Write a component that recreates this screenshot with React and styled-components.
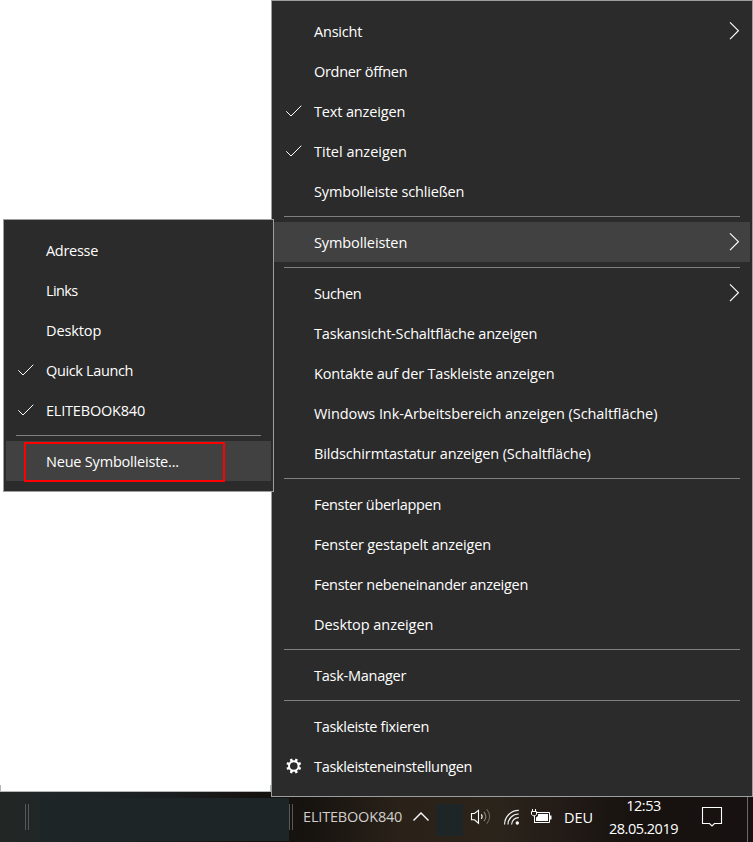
import styled, { createGlobalStyle } from "styled-components";

const GlobalStyle = createGlobalStyle`
    * { box-sizing: border-box; }
    body {
        margin: 0;
        background: #fff;
        overflow: hidden;
        font-family: "Open Sans", "Noto Sans", sans-serif;
    }
    svg { display: block; flex: none; }
`;

const mainItems = [
    { text: "Ansicht", arrow: true, spacing: -0.2 },
    { text: "Ordner öffnen", spacing: -0.3 },
    { text: "Text anzeigen", icon: "check", spacing: -0.15 },
    { text: "Titel anzeigen", icon: "check" },
    { text: "Symbolleiste schließen", spacing: -0.15 },
    { line: true },
    { text: "Symbolleisten", arrow: true, active: true, spacing: -0.1 },
    { line: true },
    { text: "Suchen", arrow: true, spacing: -0.4 },
    { text: "Taskansicht-Schaltfläche anzeigen", spacing: -0.18 },
    { text: "Kontakte auf der Taskleiste anzeigen", spacing: -0.19 },
    { text: "Windows Ink-Arbeitsbereich anzeigen (Schaltfläche)", spacing: -0.07 },
    { text: "Bildschirmtastatur anzeigen (Schaltfläche)", spacing: -0.14 },
    { line: true },
    { text: "Fenster überlappen", spacing: -0.32 },
    { text: "Fenster gestapelt anzeigen", spacing: -0.14 },
    { text: "Fenster nebeneinander anzeigen", spacing: -0.27 },
    { text: "Desktop anzeigen", spacing: -0.05 },
    { line: true },
    { text: "Task-Manager", spacing: -0.26 },
    { line: true },
    { text: "Taskleiste fixieren", spacing: -0.31 },
    { text: "Taskleisteneinstellungen", icon: "gear", spacing: -0.33 },
];

const subItems = [
    { text: "Adresse", spacing: -0.3 },
    { text: "Links", spacing: -0.6 },
    { text: "Desktop", spacing: -0.1 },
    { text: "Quick Launch", icon: "check", spacing: -0.36 },
    { text: "ELITEBOOK840", icon: "check", spacing: -0.2 },
    { line: true },
    { text: "Neue Symbolleiste...", active: true, marked: true, spacing: -0.2 },
];

function CheckIcon() {
    return (
        <svg width="18" height="14" viewBox="0 0 18 14" fill="none" stroke="#fff" strokeWidth="1">
            <path d="M1.3 7.3 L6 12 L16.3 1.7" />
        </svg>
    );
}

function GearIcon() {
    return (
        <svg width="17" height="16" viewBox="0 0 17 16" fill="none" stroke="#fff">
            <circle cx="8.8" cy="8" r="4.8" strokeWidth="2" />
            <path
                strokeWidth="2.5"
                d="M13.4 9.9 L15.7 10.9 M10.7 12.6 L11.7 14.9 M6.9 12.6 L5.9 14.9 M4.2 9.9 L1.9 10.9 M4.2 6.1 L1.9 5.1 M6.9 3.4 L5.9 1.1 M10.7 3.4 L11.7 1.1 M13.4 6.1 L15.7 5.1"
            />
        </svg>
    );
}

function ArrowIcon() {
    return (
        <svg width="12" height="20" viewBox="0 0 12 20" fill="none" stroke="#fff" strokeWidth="1.2">
            <path d="M2 1.3 L10.4 9.7 L2 18.1" />
        </svg>
    );
}

function CaretIcon() {
    return (
        <svg width="18" height="12" viewBox="0 0 18 12" fill="none" stroke="#fff" strokeWidth="1.4">
            <path d="M1.5 9.5 L9 2 L16.5 9.5" />
        </svg>
    );
}

function SpeakerIcon() {
    return (
        <svg width="22" height="20" viewBox="0 0 22 20" fill="none" stroke="#fff" strokeWidth="1.1">
            <path d="M1.5 6.5 H4.5 L8.5 3.3 V16.2 L4.5 12.8 H1.5 Z" />
            <path d="M11.3 7.4 Q13 9.6 11.3 11.8" />
            <path stroke="#85807a" d="M13.9 4.8 Q17.6 9.5 13.9 14.2" />
            <path stroke="#6b655e" d="M16.7 2.2 Q22.6 9.5 16.7 16.8" />
        </svg>
    );
}

function WifiIcon() {
    return (
        <svg width="18" height="18" viewBox="0 0 18 18" fill="none" stroke="#eee" strokeWidth="1.2">
            <path d="M1.6 16.5 A14 14 0 0 1 15.8 2.4" />
            <path d="M5 16.5 A10.5 10.5 0 0 1 15.8 6" />
            <path d="M8.6 16.5 A7 7 0 0 1 15.8 9.6" />
            <circle cx="14.3" cy="15" r="1.7" fill="#fff" stroke="none" />
        </svg>
    );
}

function BatteryIcon() {
    return (
        <svg width="23" height="18" viewBox="0 0 23 18" fill="none" stroke="#fff">
            <path d="M7 4.5 H19.5 V14.5 H4.5" />
            <path d="M20.7 7.5 V11.5" strokeWidth="1.6" />
            <path d="M8 6 H18 V13 H6 V9.5 L8 8 Z" fill="#fff" stroke="none" />
            <path d="M2.5 1 V3.5 M5.5 1 V3.5 M1.5 3.5 H6.5 V6.3 L5 7.8 H3 L1.5 6.3 Z M4.5 8 V15" />
        </svg>
    );
}

function MessageIcon() {
    return (
        <svg width="22" height="22" viewBox="0 0 22 22" fill="none" stroke="#fff" strokeWidth="1.1">
            <path d="M1.5 1.5 H20.5 V17.5 H13.5 L11 20 L8.5 17.5 H1.5 Z" />
        </svg>
    );
}

function Menu(props) {
    return (
        <MenuBox>
            {props.items.map((item, i) =>
                item.line ? (
                    <Line key={i} />
                ) : (
                    <Item key={i} $active={item.active}>
                        <IconCell>
                            {item.icon === "check" && <CheckIcon />}
                            {item.icon === "gear" && <GearIcon />}
                        </IconCell>
                        <Label $spacing={item.spacing}>{item.text}</Label>
                        {item.arrow && <ArrowIcon />}
                        {item.marked && <Marker />}
                    </Item>
                )
            )}
        </MenuBox>
    );
}

function App() {
    return (
        <Screen>
            <GlobalStyle />
            <WindowEdge />
            <Taskbar>
                <Slot $left={25}><Grip /></Slot>
                <Slot $left={11}><Blank $w={249} $h={43} $drop={5} /></Slot>
                <Slot><Grip /></Slot>
                <Slot $left={10} $w={103} $lift={2}><BarText $dim $spacing={-0.18}>ELITEBOOK840</BarText></Slot>
                <Slot $left={6}><CaretIcon /></Slot>
                <Slot $left={6}><Blank $w={27} $h={32} $drop={6} /></Slot>
                <Slot $left={7}><SpeakerIcon /></Slot>
                <Slot $left={11}><WifiIcon /></Slot>
                <Slot $left={9}><BatteryIcon /></Slot>
                <Slot $left={11} $w={32}><BarText>DEU</BarText></Slot>
                <Clock>
                    <BarText $spacing={-0.5}>12:53</BarText>
                    <BarText $spacing={-0.5}>28.05.2019</BarText>
                </Clock>
                <Slot $left={19}><MessageIcon /></Slot>
                <ShowDesktop />
            </Taskbar>
            <MainPlace>
                <Menu items={mainItems} />
            </MainPlace>
            <SubPlace>
                <Menu items={subItems} />
            </SubPlace>
        </Screen>
    );
}

const Screen = styled.div`
    position: relative;
    width: 753px;
    height: 842px;
    display: flex;
    flex-direction: column;
    justify-content: flex-end;
    overflow: hidden;
`;
const MainPlace = styled.div`
    position: absolute;
    left: 271px;
    top: 0;
    width: 482px;
`;
const SubPlace = styled.div`
    position: absolute;
    left: 3px;
    top: 219px;
    width: 271px;
`;
const MenuBox = styled.div`
    display: flex;
    flex-direction: column;
    padding: 10px 2px;
    background: #2b2b2b;
    border: 1px solid #9b9f9f;
`;
const Item = styled.div`
    position: relative;
    display: flex;
    align-items: center;
    height: 40px;
    padding-right: 10px;
    background: ${(props) => (props.$active ? "#414141" : "transparent")};
`;
const IconCell = styled.div`
    display: flex;
    align-items: center;
    width: 40px;
    padding-left: 11px;
`;
const Label = styled.div`
    flex: 1;
    padding-top: 2px;
    font-size: 14.5px;
    line-height: 20px;
    white-space: nowrap;
    color: #fff;
    letter-spacing: ${(props) => props.$spacing || 0}px;
`;
const Line = styled.div`
    height: 1px;
    margin: 5px 10px;
    background: #808080;
`;
const Marker = styled.div`
    position: absolute;
    left: 18px;
    top: 1px;
    width: 201px;
    height: 40px;
    border: 2px solid #f00;
`;
const WindowEdge = styled.div`
    width: 271px;
    height: 7px;
    border: 1px solid #b4b7b8;
    border-top: none;
`;
const Taskbar = styled.div`
    display: flex;
    align-items: center;
    height: 50px;
    background: linear-gradient(
        to right,
        #222625 0,
        #1e2426 90px,
        #1a1d1d 180px,
        #15110e 260px,
        #17130f 310px,
        #2a2219 400px,
        #2b241b 500px,
        #211a16 570px,
        #17120f 640px,
        #181111 753px
    );
`;
const Slot = styled.div`
    flex: none;
    width: ${(props) => (props.$w ? props.$w + "px" : "auto")};
    margin-left: ${(props) => props.$left || 0}px;
    padding-bottom: ${(props) => props.$lift || 0}px;
`;
const Grip = styled.div`
    width: 4px;
    height: 26px;
    border: solid #575958;
    border-width: 0 1px;
`;
const Blank = styled.div`
    width: ${(props) => props.$w}px;
    height: ${(props) => props.$h}px;
    margin-top: ${(props) => props.$drop}px;
    background: #1d2526;
`;
const BarText = styled.div`
    font-size: 14.5px;
    line-height: 23px;
    white-space: nowrap;
    color: ${(props) => (props.$dim ? "#d0cecc" : "#fff")};
    letter-spacing: ${(props) => props.$spacing || 0}px;
`;
const Clock = styled.div`
    flex: none;
    width: 77px;
    margin-left: 9px;
    text-align: center;
`;
const ShowDesktop = styled.div`
    width: 6px;
    height: 50px;
    margin-left: 24px;
    border-left: 1px solid #6b6867;
`;

export default App;
